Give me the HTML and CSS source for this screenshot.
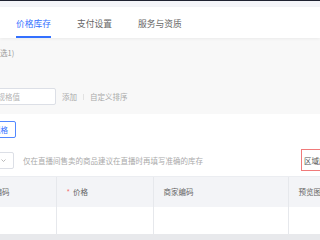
FILE: index.html
```html
<!DOCTYPE html>
<html lang="zh-CN">
<head>
    <meta charset="UTF-8">
    <meta name="viewport" content="width=device-width, initial-scale=1.0">
    <title>价格库存</title>
    <link rel="stylesheet" href="styles.css">
</head>
<body>

    <div class="topbar"></div>

    <!-- Abas -->
    <div class="tabs">
        <div class="tab active">价格库存</div>
        <div class="tab">支付设置</div>
        <div class="tab">服务与资质</div>
    </div>

    <!-- Painel de especificação -->
    <div class="panel">
        <div class="panel-inner">
            <div class="spec-title">规格名（最多选1)</div>
            <div class="spec-add">
                <input class="spec-input" type="text" placeholder="请输入商品规格值">
                <span class="link">添加</span>
                <span class="sep"></span>
                <span class="link">自定义排序</span>
            </div>
        </div>
    </div>

    <div class="main">
        <button type="button" class="btn-outline">批量添加规格</button>

        <div class="filter">
            <div class="select">
                <span>统一</span>
                <svg width="5" height="3" viewBox="0 0 5 3"><path d="M0.5 0.5 L2.5 2.5 L4.5 0.5" fill="none" stroke="#a8a8a8" stroke-width="0.8"/></svg>
            </div>
            <span class="hint">仅在直播间售卖的商品建议在直播时再填写准确的库存</span>
            <button type="button" class="btn-region">区域库存设置</button>
        </div>

        <!-- Tabela SKU -->
        <div class="sku-table">
            <div class="sku-row sku-head">
                <div class="cell">商品规格编码</div>
                <div class="cell"><span class="req">*</span>价格</div>
                <div class="cell">商家编码</div>
                <div class="cell">预览图</div>
            </div>
            <div class="sku-row sku-body">
                <div class="cell"></div>
                <div class="cell"></div>
                <div class="cell"></div>
                <div class="cell"></div>
            </div>
        </div>
        <div class="scroll-track"></div>
    </div>

</body>
</html>
```

FILE: styles.css
```css
body {
    font-family: "Noto Sans CJK SC", "Noto Sans", sans-serif;
    font-size: 7.5px;
    margin: 0;
    background-color: white;
    overflow: hidden;
    color: #666;
}

.topbar {
    height: 1px;
    background-color: #1f2231;
    border-bottom: 6px solid #f4f5f9;
}

.tabs {
    position: relative;
    z-index: 1;
    display: flex;
    height: 31px;
    padding-left: 3px;
    background-color: white;
    box-shadow: 0 1px 3px rgba(0, 0, 0, 0.06);
}

.tab {
    position: relative;
    padding: 3px 13px 0;
    line-height: 28px;
    font-size: 8.75px;
    color: #666;
}

.tab.active {
    color: #3370ff;
}

.tab.active::after {
    content: "";
    position: absolute;
    left: 13px;
    right: 13px;
    bottom: 0;
    height: 2px;
    background-color: #3370ff;
}

/* Painel cinza */
.panel {
    background-color: #f8f8f8;
    padding: 9px 0;
}

.panel-inner {
    margin-left: -45px;
}

.spec-title {
    line-height: 12px;
    color: #999;
}

.spec-add {
    display: flex;
    align-items: center;
    margin-top: 29px;
}

.spec-input {
    box-sizing: border-box;
    width: 101px;
    height: 17px;
    padding: 0 0 0 4px;
    border: 1px solid #dcdfe6;
    border-radius: 2px;
    background-color: white;
    font-family: inherit;
    font-size: 7.5px;
    outline: none;
}

.spec-input::placeholder {
    color: #b5b5b5;
}

.link {
    color: #aaa;
}

.spec-input + .link {
    margin-left: 6px;
}

.sep {
    width: 1px;
    height: 6px;
    margin: 0 6px;
    background-color: #e2e2e2;
}

.main {
    margin-left: -45px;
    padding-top: 7px;
}

.btn-outline {
    display: block;
    height: 17px;
    padding: 0 7px;
    border: 1px solid #5288ff;
    border-radius: 2px;
    background-color: white;
    color: #3370ff;
    font-family: inherit;
    font-size: 7.5px;
}

.filter {
    display: flex;
    align-items: center;
    height: 22px;
    margin-top: 11px;
}

.select {
    box-sizing: border-box;
    flex-shrink: 0;
    display: flex;
    align-items: center;
    justify-content: space-between;
    width: 59px;
    height: 17px;
    padding: 0 7px 0 6px;
    border: 1px solid #dcdfe6;
    border-radius: 2px;
    color: #666;
}

.hint {
    flex-shrink: 0;
    margin-left: 9px;
    color: #aaa;
    white-space: nowrap;
}

.btn-region {
    flex-shrink: 0;
    height: 22px;
    margin-left: 98px;
    padding: 0 2px;
    border: 1px solid #f07a7a;
    background-color: white;
    color: #555;
    font-family: inherit;
    font-size: 7.5px;
    white-space: nowrap;
}

.sku-table {
    margin-top: 5px;
    border-top: 1px solid #ebedf1;
}

.sku-row {
    display: grid;
    grid-template-columns: 102px 97px 135px 120px;
}

.cell {
    box-sizing: border-box;
    padding-left: 9.5px;
    border-right: 1px solid #e6e8ec;
    white-space: nowrap;
}

.sku-head {
    height: 30px;
    line-height: 30px;
    background-color: #f3f4f7;
    color: #666;
}

.sku-body {
    height: 27px;
}

.req {
    color: #f56c6c;
    margin-right: 3px;
}

.scroll-track {
    height: 6px;
    background-color: #e8e9ec;
}
```
